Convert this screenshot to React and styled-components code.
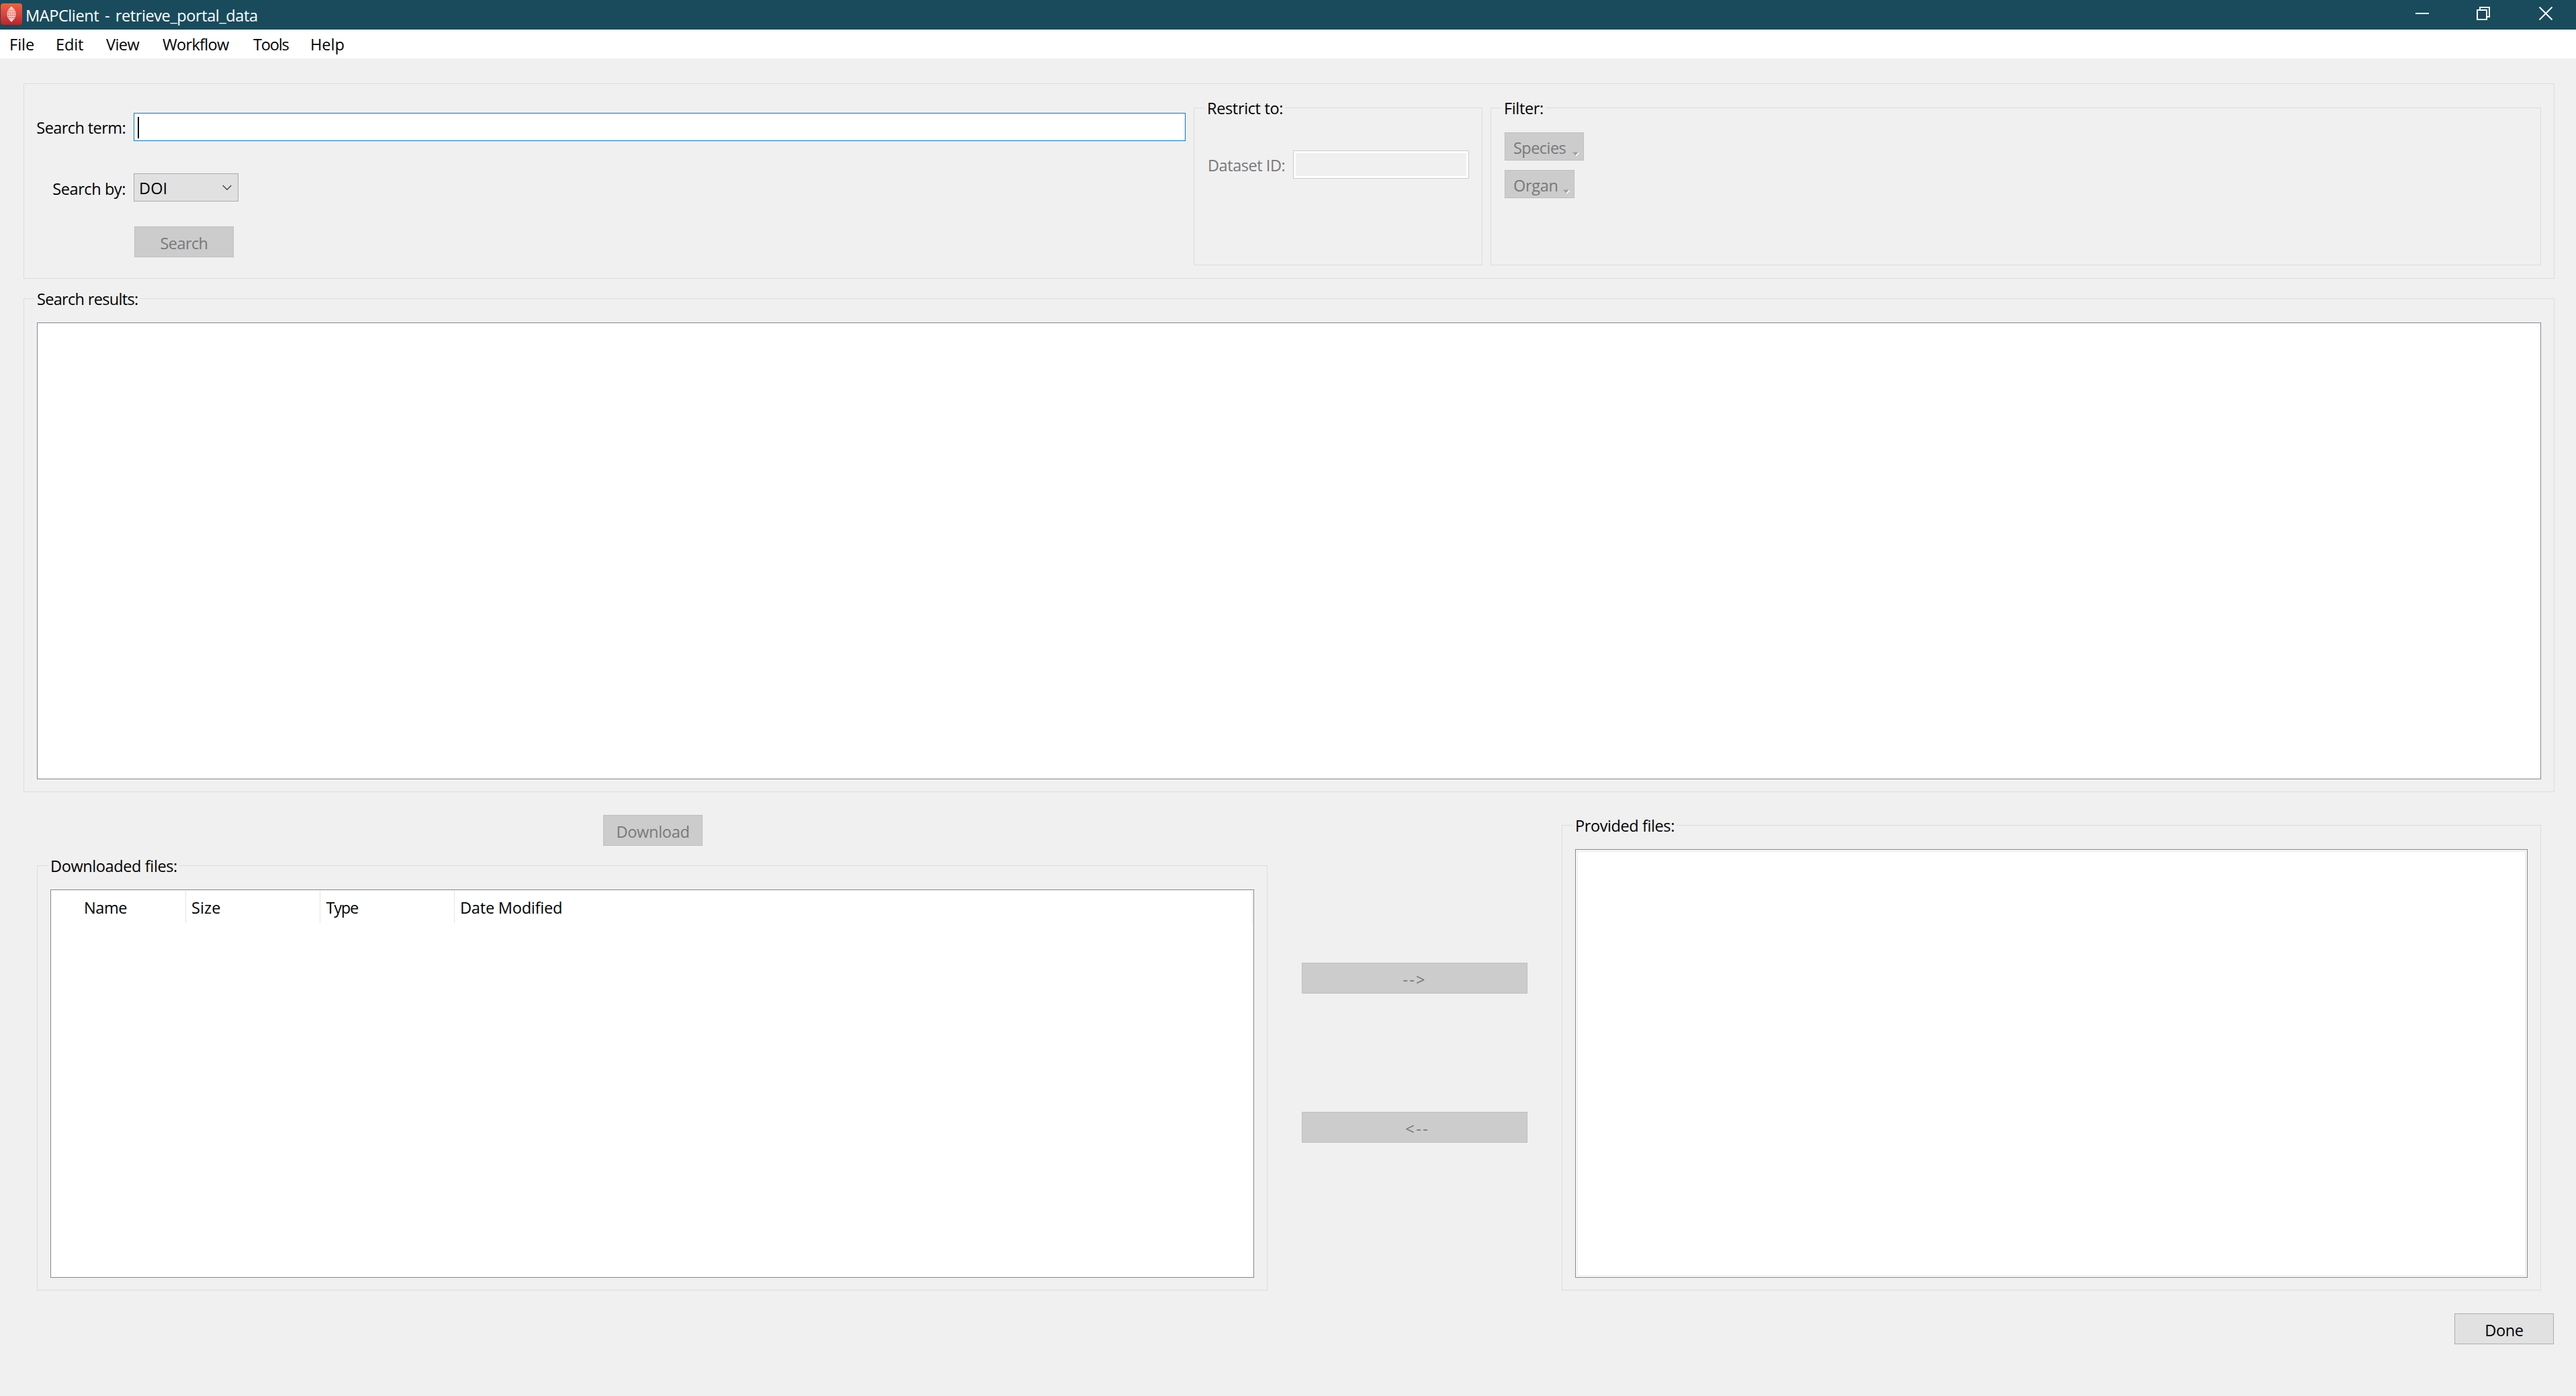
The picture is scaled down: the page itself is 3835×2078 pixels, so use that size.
import React from "react";
import styled, { createGlobalStyle, css } from "styled-components";

const color = {
  title: "#194b5c",
  window: "#f0f0f0",
  groupLine: "#dcdcdc",
  frame: "#828790",
  focus: "#0078d7",
  mutedText: "#787878",
};

const GlobalStyle = createGlobalStyle`
  *, *::before, *::after { box-sizing: border-box; }
  body {
    margin: 0;
    background: ${color.window};
    color: #000;
    font-family: "Open Sans", "Noto Sans", sans-serif;
    font-size: 23.5px;
    line-height: 32px;
    overflow: hidden;
  }
`;

const Window = styled.div`
  display: flex;
  flex-direction: column;
  width: 3835px;
  height: 2078px;
  background: ${color.window};
`;

const Text = styled.span`
  display: block;
  white-space: pre;
  letter-spacing: ${(p) => p.$track || 0}px;
  padding-top: ${(p) => p.$drop || 0}px;
`;

/* ---- title bar ---- */

const TitleBar = styled.header`
  display: flex;
  align-items: center;
  height: 44px;
  padding-left: 1px;
  background: ${color.title};
  color: #fff;
`;

const AppIcon = styled.svg`
  width: 32px;
  height: 32px;
  margin: 0 5px 2px 0;
`;

const Caption = styled.h1`
  flex: 1;
  margin: 0;
  font: inherit;
  word-spacing: 3px;
`;

const WindowButtons = styled.div`
  display: grid;
  grid-template-columns: 86px 96px 90px;
  height: 40px;
  align-self: flex-start;
`;

const WindowButton = styled.button`
  display: flex;
  align-items: center;
  justify-content: center;
  border: 0;
  padding: 0;
  background: none;
  color: #fff;

  svg {
    width: 20px;
    height: 20px;
    fill: none;
    stroke: currentColor;
    stroke-width: 2;
  }
`;

/* ---- menu bar ---- */

const MenuBar = styled.nav`
  display: grid;
  grid-template-columns: 69px 75px 84px 135px 85px 60px;
  align-items: center;
  height: 43px;
  padding-left: 14px;
  background: #fff;
`;

/* ---- group boxes ---- */

const Main = styled.main`
  display: flex;
  flex-direction: column;
  padding: 37px 32px 0 35px;
`;

const Group = styled.section`
  display: flex;
  flex-direction: column;
  height: ${(p) => p.$height}px;
  border: 1px solid ${color.groupLine};
`;

const Legend = styled.h2`
  align-self: flex-start;
  height: 32px;
  margin: -16px 0 0 15px;
  padding: 0 3px 0 4px;
  background: ${color.window};
  font: inherit;
`;

const Frame = styled.div`
  flex: 1;
  margin: 19px 19px 18px;
  border: 1px solid ${color.frame};
  background: #fff;
  ${(p) =>
    p.$inset &&
    css`
      padding: 1px;
      &::before {
        content: "";
        display: block;
        height: 100%;
        border: 2px solid ${color.window};
      }
    `}
`;

const ResultsGroup = styled(Group)`
  margin-top: 29px;
`;

/* ---- buttons and fields ---- */

const Button = styled.button`
  display: flex;
  align-items: center;
  justify-content: center;
  width: ${(p) => p.$width}px;
  height: 46px;
  padding: 0;
  border: 1px solid #adadad;
  background: #e1e1e1;
  color: #000;
  font: inherit;

  &:disabled {
    border-color: #bfbfbf;
    background: #cccccc;
    color: ${color.mutedText};
  }
`;

const MenuButton = styled(Button)`
  justify-content: space-between;
  height: 42px;
  padding: 0 6px 0 12px;
`;

const MenuArrow = styled.svg`
  width: 10px;
  height: 7px;
  align-self: flex-end;
  margin-bottom: 5px;
`;

const SearchPanel = styled(Group)`
  flex-direction: row;
`;

const SearchForm = styled.div`
  display: grid;
  grid-template-columns: 163px 1fr;
  grid-template-rows: 42px 42px 46px;
  row-gap: 48px;
  width: 1729px;
  padding-top: 43px;
`;

const FieldLabel = styled.label`
  display: flex;
  align-items: center;
  justify-content: flex-end;
  padding-right: 12px;
`;

const SearchField = styled.div`
  display: flex;
  align-items: center;
  padding-left: 5px;
  border: 1px solid ${color.focus};
  background: #fff;
`;

const Caret = styled.i`
  width: 2px;
  height: 32px;
  margin-top: 2px;
  background: #000;
`;

const Select = styled.div`
  display: flex;
  align-items: center;
  justify-content: space-between;
  width: 156px;
  padding: 0 9px 0 7px;
  border: 1px solid #adadad;
  background: #e1e1e1;
`;

const SubmitCell = styled.div`
  grid-column: 2;
  margin-top: -11px;
  padding-left: 1px;
`;

const RestrictGroup = styled(Group)`
  width: 430px;
  margin: 35px 0 0 12px;
`;

const FilterGroup = styled(Group)`
  flex: 1;
  margin: 35px 19px 0 12px;
`;

const DatasetRow = styled.label`
  display: grid;
  grid-template-columns: 127px 1fr;
  align-items: center;
  margin: 47px 19px 0 20px;
  color: ${color.mutedText};
`;

const DisabledField = styled.div`
  height: 42px;
  border: 1px solid #cccccc;
  box-shadow: inset 0 0 0 3px #fff;
  background: ${color.window};
`;

const FilterList = styled.div`
  display: flex;
  flex-direction: column;
  align-items: flex-start;
  gap: 14px;
  padding: 20px 20px 0;
`;

/* ---- file area ---- */

const FileArea = styled.div`
  display: grid;
  grid-template-columns: 1832px 336px 1458px;
  column-gap: 51px;
  height: 708px;
  margin-top: 34px;
  padding-left: 20px;
`;

const DownloadColumn = styled.div`
  display: flex;
  flex-direction: column;
  gap: 29px;
`;

const DownloadCell = styled.div`
  display: flex;
  justify-content: center;
  padding-left: 2px;
`;

const TransferColumn = styled.div`
  display: flex;
  flex-direction: column;
  gap: 176px;
  padding-top: 220px;
`;

const ProvidedColumn = styled.div`
  padding-top: 15px;
`;

const Tree = styled(Frame)`
  padding: 1px;
`;

const TreeHeader = styled.div`
  display: grid;
  grid-template-columns: 200px 200px 200px 1fr;
  height: 48px;
`;

const HeaderCell = styled.div`
  display: flex;
  align-items: center;
  padding-left: ${(p) => p.$indent}px;
  border-right: 1px solid #e5e5e5;
`;

const Footer = styled.footer`
  display: flex;
  justify-content: flex-end;
  padding: 34px 1px 0 0;
`;

const menus = [
  ["File", 0],
  ["Edit", -0.12],
  ["View", -0.55],
  ["Workflow", -0.68],
  ["Tools", -1.16],
  ["Help", 0],
];

const columns = [
  { name: "Name", indent: 48, track: -0.4 },
  { name: "Size", indent: 8, track: 0.1 },
  { name: "Type", indent: 8.5, track: -1.2 },
  { name: "Date Modified", indent: 8, track: -0.2 },
];

const filters = [
  { name: "Species", width: 118, track: -0.55 },
  { name: "Organ", width: 104, track: -0.3 },
];

function Logo() {
  return (
    <AppIcon viewBox="0 0 32 32">
      <defs>
        <linearGradient id="tile" x1="0" y1="0" x2="0" y2="1">
          <stop offset="0" stopColor="#f0623a" />
          <stop offset="0.5" stopColor="#dc4440" />
          <stop offset="1" stopColor="#b8262c" />
        </linearGradient>
      </defs>
      <rect width="32" height="32" rx="4" fill="url(#tile)" />
      <path d="M16 5C8 11 8 21 16 27C24 21 24 11 16 5Z" fill="#fff" fillOpacity="0.25" />
      <g fill="none" stroke="#ffe3dc" strokeWidth="0.9">
        <path d="M16 5C8 11 8 21 16 27C24 21 24 11 16 5Z" />
        <path d="M16 5C12 11 12 21 16 27C20 21 20 11 16 5ZM16 5V27" />
        <path d="M12.6 9H19.4M11 12.5H21M10.2 16H21.8M11 19.5H21M12.6 23H19.4" />
      </g>
      <path d="M16 4.6L18 7.6H14ZM16 27.4L18 24.4H14Z" fill="#fff" />
    </AppIcon>
  );
}

function TitledGroup({ as: Box = Group, title, track, height, children }) {
  return (
    <Box $height={height}>
      <Legend>
        <Text $track={track}>{title}</Text>
      </Legend>
      {children}
    </Box>
  );
}

export default function App() {
  return (
    <Window>
      <GlobalStyle />
      <TitleBar>
        <Logo />
        <Caption>
          <Text $drop={1} $track={-0.4}>MAPClient - retrieve_portal_data</Text>
        </Caption>
        <WindowButtons>
          <WindowButton aria-label="Minimize">
            <svg viewBox="0 0 20 20"><path d="M0 10H20" /></svg>
          </WindowButton>
          <WindowButton aria-label="Restore">
            <svg viewBox="0 0 20 20"><path d="M1 5H15V19H1ZM5 5V1H19V15H15" /></svg>
          </WindowButton>
          <WindowButton aria-label="Close">
            <svg viewBox="0 0 20 20"><path d="M0.5 0.5L19.5 19.5M19.5 0.5L0.5 19.5" /></svg>
          </WindowButton>
        </WindowButtons>
      </TitleBar>

      <MenuBar>
        {menus.map(([name, track]) => (
          <Text key={name} $drop={1} $track={track}>{name}</Text>
        ))}
      </MenuBar>

      <Main>
        <SearchPanel $height={291}>
          <SearchForm>
            <FieldLabel><Text $drop={2} $track={-0.58}>Search term:</Text></FieldLabel>
            <SearchField><Caret /></SearchField>
            <FieldLabel><Text $drop={3} $track={-0.41}>Search by:</Text></FieldLabel>
            <Select>
              <Text $drop={1} $track={0.1}>DOI</Text>
              <svg width="14" height="9" viewBox="0 0 14 9" fill="none" stroke="#444" strokeWidth="1.4">
                <path d="M0.7 1L7 7.3L13.3 1" />
              </svg>
            </Select>
            <SubmitCell>
              <Button disabled $width={148}><Text $drop={3} $track={-0.6}>Search</Text></Button>
            </SubmitCell>
          </SearchForm>

          <TitledGroup as={RestrictGroup} title="Restrict to:" track={-0.35} height={235}>
            <DatasetRow>
              <Text $drop={2} $track={-0.45}>Dataset ID:</Text>
              <DisabledField />
            </DatasetRow>
          </TitledGroup>

          <TitledGroup as={FilterGroup} title="Filter:" track={-0.36} height={235}>
            <FilterList>
              {filters.map((f) => (
                <MenuButton key={f.name} disabled $width={f.width}>
                  <Text $drop={3} $track={f.track}>{f.name}</Text>
                  <MenuArrow viewBox="0 0 10 7">
                    <path d="M0 0.5H9L4.5 5.5Z" fill="#a0a0a0" />
                    <path d="M9.5 1.2L5 6.2" stroke="#fff" strokeWidth="1.5" />
                  </MenuArrow>
                </MenuButton>
              ))}
            </FilterList>
          </TitledGroup>
        </SearchPanel>

        <TitledGroup as={ResultsGroup} title="Search results:" track={-0.68} height={735}>
          <Frame />
        </TitledGroup>

        <FileArea>
          <DownloadColumn>
            <DownloadCell>
              <Button disabled $width={148}><Text $drop={3} $track={-0.27}>Download</Text></Button>
            </DownloadCell>
            <TitledGroup title="Downloaded files:" track={-0.38} height={633}>
              <Tree>
                <TreeHeader>
                  {columns.map((c) => (
                    <HeaderCell key={c.name} $indent={c.indent}>
                      <Text $drop={2} $track={c.track}>{c.name}</Text>
                    </HeaderCell>
                  ))}
                </TreeHeader>
              </Tree>
            </TitledGroup>
          </DownloadColumn>

          <TransferColumn>
            <Button disabled $width={336}><Text $drop={4} $track={2.2}>{"-->"}</Text></Button>
            <Button disabled $width={336}><Text $drop={4} $track={2.5}>{" <--"}</Text></Button>
          </TransferColumn>

          <ProvidedColumn>
            <TitledGroup title="Provided files:" track={-0.4} height={693}>
              <Frame $inset />
            </TitledGroup>
          </ProvidedColumn>
        </FileArea>

        <Footer>
          <Button $width={148}><Text $drop={3} $track={-0.37}>Done</Text></Button>
        </Footer>
      </Main>
    </Window>
  );
}
